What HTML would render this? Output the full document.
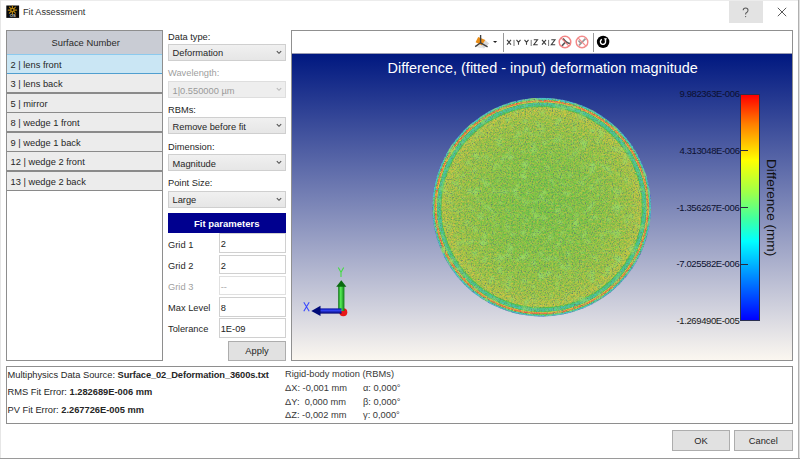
<!DOCTYPE html>
<html><head><meta charset="utf-8">
<style>
*{box-sizing:border-box;margin:0;padding:0}
html,body{width:800px;height:459px;overflow:hidden;background:#fff}
body{position:relative;font-family:"Liberation Sans",sans-serif;font-size:9.3px;color:#262626}
.a{position:absolute;white-space:nowrap}
.t{position:absolute;white-space:nowrap;line-height:1}
/* table */
#tbl{position:absolute;left:6px;top:30px;width:157px;height:331px;border:1px solid #8e8e8e;background:#fff;overflow:hidden}
#tin{position:absolute;left:0;top:-1px;width:155px;height:331px}
.row{position:absolute;left:0;width:155px;background:#ededed;border-bottom:1.5px solid #7d7d7d}
.combo{position:absolute;left:167.5px;width:118.5px;height:17px;border:1px solid #cfcfcf;background:linear-gradient(#f0f0f0,#e6e6e6)}
.combo .chev{position:absolute;left:107.8px;top:5.2px}
.field{position:absolute;left:218.5px;width:67px;height:19.5px;border:1px solid #d0d0d0;background:#fff}
.btn{position:absolute;background:#e1e1e1;border:1px solid #adadad}
</style></head><body>
<!-- window frame -->
<div class="a" style="left:0;top:0;width:800px;height:1px;background:#ececec"></div>
<div class="a" style="left:0;top:0;width:1px;height:459px;background:#e6e6e6"></div>
<div class="a" style="left:798px;top:0;width:1px;height:459px;background:#b0b0b0"></div><div class="a" style="left:799px;top:0;width:1px;height:459px;background:#dedede"></div>
<div class="a" style="left:0;top:458px;width:800px;height:1px;background:#9a9a9a"></div>

<!-- title bar -->
<svg class="a" style="left:6px;top:5px" width="14" height="14" viewBox="0 0 14 14">
<rect x="0.3" y="0.5" width="12.8" height="12.4" fill="#0a0a0a"/>
<g stroke="#b8860f" stroke-width="1.1" stroke-linecap="round">
<line x1="6.4" y1="0.9" x2="6.4" y2="9.3"/><line x1="2.2" y1="5.1" x2="10.6" y2="5.1"/>
<line x1="3.4" y1="2.1" x2="9.4" y2="8.1"/><line x1="9.4" y1="2.1" x2="3.4" y2="8.1"/>
</g>
<circle cx="6.4" cy="5.1" r="2.3" fill="#b8860f"/>
<circle cx="6.4" cy="5.1" r="1" fill="#0a0a0a"/>
<text x="6.7" y="12.2" font-size="4.2" font-weight="bold" fill="#c8c8c8" text-anchor="middle" font-family="Liberation Sans">OS</text>
</svg>
<div class="t" style="left:23px;top:8.3px;font-size:9.2px;color:#333">Fit Assessment</div>
<div class="a" style="left:729px;top:1px;width:34px;height:22px;background:#e3e3e3"></div>
<svg class="a" style="left:740px;top:6px" width="12" height="13" viewBox="0 0 12 13"><path d="M3.2 4.2 Q3.2 2 5.6 2 Q8 2 8 4.3 Q8 5.9 6.3 6.8 Q5.6 7.2 5.6 8.6" stroke="#5a5a5a" stroke-width="1.05" fill="none"/><circle cx="5.6" cy="10.6" r="0.65" fill="#5a5a5a"/></svg>
<svg class="a" style="left:777px;top:7px" width="10" height="10"><path d="M0.8 0.8L9.2 9.2M9.2 0.8L0.8 9.2" stroke="#505050" stroke-width="0.95"/></svg>

<!-- surface table -->
<div id="tbl"><div id="tin">
  <div class="a" style="left:0;top:0;width:155px;height:24.5px;background:#c9ccd4"></div>
  <div class="t" style="left:44.5px;top:8.3px;color:#2a2a2a;font-size:9.4px">Surface Number</div>
  <div class="a" style="left:0;top:24px;width:155px;height:20px;background:#cae6f4;border-top:1px solid #8ccaee;border-bottom:1px solid #509fd0"></div>
  <div class="a" style="left:0;top:44px;width:155px;height:117px;background:#ececec"></div>
  <div class="a" style="left:0;top:62.2px;width:155px;height:1.6px;background:#8a8a8a"></div>
  <div class="a" style="left:0;top:81.75px;width:155px;height:1.6px;background:#8a8a8a"></div>
  <div class="a" style="left:0;top:101.25px;width:155px;height:1.6px;background:#8a8a8a"></div>
  <div class="a" style="left:0;top:120.75px;width:155px;height:1.6px;background:#8a8a8a"></div>
  <div class="a" style="left:0;top:140.25px;width:155px;height:1.6px;background:#8a8a8a"></div>
  <div class="a" style="left:0;top:159.6px;width:155px;height:1.6px;background:#8a8a8a"></div>
  <div class="t" style="left:3.5px;top:30.60px">2 | lens front</div>
  <div class="t" style="left:3.5px;top:50.10px">3 | lens back</div>
  <div class="t" style="left:3.5px;top:69.60px">5 | mirror</div>
  <div class="t" style="left:3.5px;top:89.10px">8 | wedge 1 front</div>
  <div class="t" style="left:3.5px;top:108.60px">9 | wedge 1 back</div>
  <div class="t" style="left:3.5px;top:128.10px">12 | wedge 2 front</div>
  <div class="t" style="left:3.5px;top:147.60px">13 | wedge 2 back</div>
</div></div>

<!-- middle controls -->
<div class="t" style="left:168px;top:32.6px">Data type:</div>
<div class="combo" style="top:43.5px"><div class="t" style="left:4px;top:4.5px">Deformation</div><svg class="chev" width="7" height="5" viewBox="0 0 7 5"><path d="M0.8 1.2 L3 3.3 L5.2 1.2" stroke="#505050" stroke-width="1.1" fill="none"/></svg></div>
<div class="t" style="left:168px;top:69.1px;color:#a0a0a0">Wavelength:</div>
<div class="combo" style="top:81px;border-color:#dedede;background:#eeeeee"><div class="t" style="left:4px;top:4.5px;color:#9a9a9a">1|0.550000 µm</div><svg class="chev" width="7" height="5" viewBox="0 0 7 5"><path d="M0.8 1.2 L3 3.3 L5.2 1.2" stroke="#b8b8b8" stroke-width="1.1" fill="none"/></svg></div>
<div class="t" style="left:168px;top:106.1px">RBMs:</div>
<div class="combo" style="top:117px"><div class="t" style="left:4px;top:4.5px">Remove before fit</div><svg class="chev" width="7" height="5" viewBox="0 0 7 5"><path d="M0.8 1.2 L3 3.3 L5.2 1.2" stroke="#505050" stroke-width="1.1" fill="none"/></svg></div>
<div class="t" style="left:168px;top:142.6px">Dimension:</div>
<div class="combo" style="top:154px"><div class="t" style="left:4px;top:4.5px">Magnitude</div><svg class="chev" width="7" height="5" viewBox="0 0 7 5"><path d="M0.8 1.2 L3 3.3 L5.2 1.2" stroke="#505050" stroke-width="1.1" fill="none"/></svg></div>
<div class="t" style="left:168px;top:179.1px">Point Size:</div>
<div class="combo" style="top:190.5px"><div class="t" style="left:4px;top:4.5px">Large</div><svg class="chev" width="7" height="5" viewBox="0 0 7 5"><path d="M0.8 1.2 L3 3.3 L5.2 1.2" stroke="#505050" stroke-width="1.1" fill="none"/></svg></div>

<div class="a" style="left:167.5px;top:213px;width:118.5px;height:20px;background:#00008f"></div>
<div class="t" style="left:167.5px;top:218.8px;width:118.5px;text-align:center;color:#fff;font-weight:bold;font-size:9.5px">Fit parameters</div>

<div class="t" style="left:168px;top:240.6px">Grid 1</div>
<div class="field" style="top:233px"><div class="t" style="left:1.2px;top:6px;color:#222">2</div></div>
<div class="t" style="left:168px;top:261.6px">Grid 2</div>
<div class="field" style="top:254.5px"><div class="t" style="left:1.2px;top:6px;color:#222">2</div></div>
<div class="t" style="left:168px;top:282.6px;color:#a0a0a0">Grid 3</div>
<div class="field" style="top:275.5px;border-color:#e0e0e0"><div class="t" style="left:1.2px;top:6px;color:#aaa">--</div></div>
<div class="t" style="left:168px;top:303.6px">Max Level</div>
<div class="field" style="top:297px"><div class="t" style="left:1.2px;top:6px;color:#222">8</div></div>
<div class="t" style="left:168px;top:324.6px">Tolerance</div>
<div class="field" style="top:318px"><div class="t" style="left:1.2px;top:6px;color:#222">1E-09</div></div>
<div class="btn" style="left:228px;top:341px;width:58px;height:20px"><div class="t" style="left:0;top:5px;width:56px;text-align:center">Apply</div></div>

<!-- 3D view -->
<div class="a" style="left:291px;top:30px;width:502px;height:331px;border:1px solid #909090;background:#fff;overflow:hidden">
  <div class="a" style="left:0;top:22px;width:500px;height:1px;background:#9a9cb4"></div>
  <div class="a" style="left:0;top:23px;width:500px;height:306px;background:linear-gradient(#001880,#fbf7f0)"></div>
</div>
<!-- toolbar -->
<svg class="a" style="left:472px;top:32px" width="28" height="19" viewBox="0 0 28 19">
<path d="M8.6 10.8 L13.3 8.3 L17.2 11.5 L12 16.6 L8.6 13.5 Z" fill="#d8d8d8"/>
<path d="M3.3 13.8 L8.6 10.8 L8.6 13.5 L12 16.6 L6 15.5 Z" fill="#e6e6e6"/>
<path d="M3.6 10.2 L6.2 5.0 L13.3 8.0 L9.7 13.2 Z" fill="#e88b14"/>
<path d="M8.6 3 V11.2 M8.6 10.8 L3.2 14.6 M8.6 10.8 L15.6 14.8" stroke="#404040" stroke-width="1.35" fill="none"/>
<path d="M21 8.9 H25.2 L23.1 11 Z" fill="#222"/>
</svg>
<div class="a" style="left:502.5px;top:32.5px;width:1px;height:19px;background:#9a9a9a"></div>
<svg class="a" style="left:505px;top:37px" width="52" height="10" viewBox="0 0 52 10">
<g stroke="#3c3c3c" stroke-width="1.1" fill="none">
<path d="M2 2.8 L6 7.7 M6 2.8 L2 7.7"/><path d="M9 2.9 V9" stroke="#777" stroke-width="1"/><path d="M11.5 2.8 L13.5 5.3 L15.5 2.8 M13.5 5.3 V7.7"/>
<path d="M19.5 2.8 L21.5 5.3 L23.5 2.8 M21.5 5.3 V7.7"/><path d="M26.2 2.9 V9" stroke="#777" stroke-width="1"/><path d="M28.8 2.8 H32.5 L28.8 7.7 H32.7"/>
<path d="M37 2.8 L41 7.7 M41 2.8 L37 7.7"/><path d="M43.6 2.9 V9" stroke="#777" stroke-width="1"/><path d="M46.3 2.8 H50 L46.3 7.7 H50.2"/>
</g>
</svg>
<svg class="a" style="left:558px;top:35px" width="14" height="14" viewBox="0 0 14 14">
<path d="M5 3.5 Q8 8 12 8.5" stroke="#555" stroke-width="1.7" fill="none"/>
<path d="M7.5 7 L3.8 11" stroke="#555" stroke-width="1.7"/>
<circle cx="7" cy="7" r="5.8" fill="none" stroke="#f28585" stroke-width="1.45"/>
<path d="M3 2.8 L11 11.2" stroke="#f28585" stroke-width="1.2"/>
</svg>
<svg class="a" style="left:575.2px;top:35px" width="14" height="14" viewBox="0 0 14 14">
<path d="M10.5 3.7 L4 10.3 M3.5 5.5 L6.5 9" stroke="#999" stroke-width="1.7" fill="none"/>
<circle cx="7" cy="7" r="5.8" fill="none" stroke="#f28a8a" stroke-width="1.45"/>
<path d="M3 2.8 L11 11.2" stroke="#f28a8a" stroke-width="1.2"/>
</svg>
<div class="a" style="left:592.5px;top:32.5px;width:1px;height:19px;background:#9a9a9a"></div>
<svg class="a" style="left:596px;top:35px" width="14" height="14" viewBox="0 0 14 14">
<circle cx="7.1" cy="6.9" r="6.2" fill="#000"/>
<path d="M5.9 4.4 A2.6 2.6 0 1 0 9.0 5.1" stroke="#fff" stroke-width="1.35" fill="none"/>
<path d="M7.7 3.4 L10.7 3.0 L10.1 6.3 Z" fill="#fff"/>
</svg>

<!-- title in view -->
<div class="t" style="left:387.5px;top:61.2px;font-size:14.45px;color:#fff">Difference, (fitted - input) deformation magnitude</div>

<!-- disk -->
<svg class="a" style="left:426px;top:92px" width="232" height="232" viewBox="-4 -4 232 232">
<defs>
<radialGradient id="dg" cx="111.7" cy="111.2" r="109.5" gradientUnits="userSpaceOnUse">
<stop offset="0" stop-color="rgb(150,150,150)"/>
<stop offset="0.5" stop-color="rgb(155,155,155)"/>
<stop offset="0.8" stop-color="rgb(163,163,163)"/>
<stop offset="0.88" stop-color="rgb(170,170,170)"/>
<stop offset="0.91" stop-color="rgb(172,172,172)"/>
<stop offset="0.925" stop-color="rgb(96,96,96)"/>
<stop offset="0.95" stop-color="rgb(86,86,86)"/>
<stop offset="0.962" stop-color="rgb(205,205,205)"/>
<stop offset="0.975" stop-color="rgb(228,228,228)"/>
<stop offset="0.984" stop-color="rgb(80,80,80)"/>
<stop offset="1" stop-color="rgb(50,50,50)"/>
</radialGradient>
<filter id="nz" x="-4" y="-4" width="232" height="232" filterUnits="userSpaceOnUse" color-interpolation-filters="sRGB">
<feTurbulence type="fractalNoise" baseFrequency="0.9" numOctaves="1" seed="2" result="td"/>
<feDisplacementMap in="SourceGraphic" in2="td" scale="2.2" xChannelSelector="R" yChannelSelector="G" result="disp"/>
<feTurbulence type="fractalNoise" baseFrequency="0.55" numOctaves="2" seed="5" result="t1"/>
<feColorMatrix in="t1" values="1 0 0 0 0  1 0 0 0 0  1 0 0 0 0  0 0 0 0 0.5" result="n1"/>
<feComposite in="disp" in2="n1" operator="arithmetic" k1="0" k2="1" k3="0.45" k4="-0.1125" result="v"/>
<feComponentTransfer in="v" result="jet">
<feFuncR type="table" tableValues="0 0 0 1 1"/>
<feFuncG type="table" tableValues="0 1 1 1 0"/>
<feFuncB type="table" tableValues="1 1 0 0 0"/>
<feFuncA type="table" tableValues="0 1 1"/>
</feComponentTransfer>
<feColorMatrix in="jet" values="0.6 0 0 0 0.3  0 0.6 0 0 0.17  0 0 0.52 0 0.27  0 0 0 1 0" result="jet2"/>
<feTurbulence type="fractalNoise" baseFrequency="0.85" numOctaves="2" seed="9" result="t2"/>
<feColorMatrix in="t2" values="0 0 0 0 0.38  0 0 0 0 0.52  0 0 0 0 0.42  2.6 0 0 0 -1.3" result="sp"/>
<feTurbulence type="fractalNoise" baseFrequency="0.12" numOctaves="3" seed="21" result="t3"/>
<feColorMatrix in="t3" values="0 0 0 0 0.6  0 0 0 0 0.86  0 0 0 0 0.4  2.8 0 0 0 -1.45" result="lt"/>
<feMerge result="m"><feMergeNode in="jet2"/><feMergeNode in="lt"/><feMergeNode in="sp"/></feMerge>
<feGaussianBlur in="m" stdDeviation="0.4" result="sb"/>
<feComposite in="sb" in2="SourceAlpha" operator="in"/>
</filter>
</defs>
<circle cx="111.7" cy="111.2" r="109.5" fill="url(#dg)" filter="url(#nz)"/>
</svg>

<!-- color bar -->
<div class="a" style="left:740px;top:94px;width:20px;height:227px;border:1px solid #2a3050;background:linear-gradient(#ff0000 0%,#ff8000 13%,#ffff00 29%,#a0ff48 43%,#40ffa0 55%,#00ffff 65%,#0090ff 80%,#0000ff 100%)"></div>
<div class="a" style="left:740px;top:150px;width:8px;height:1px;background:#2a2a40"></div>
<div class="a" style="left:740px;top:207px;width:8px;height:1px;background:#2a2a40"></div>
<div class="a" style="left:740px;top:264px;width:8px;height:1px;background:#2a2a40"></div>
<div class="t" style="left:679.5px;top:89px;font-size:9.5px;letter-spacing:-0.38px;color:#0c1030">9.982363E-006</div>
<div class="t" style="left:679.5px;top:145.7px;font-size:9.5px;letter-spacing:-0.38px;color:#0c1030">4.313048E-006</div>
<div class="t" style="left:676.5px;top:202.5px;font-size:9.5px;letter-spacing:-0.38px;color:#0c1030">-1.356267E-006</div>
<div class="t" style="left:676.5px;top:259.3px;font-size:9.5px;letter-spacing:-0.38px;color:#0c1030">-7.025582E-006</div>
<div class="t" style="left:676.5px;top:316px;font-size:9.5px;letter-spacing:-0.38px;color:#1a1a1a">-1.269490E-005</div>
<div class="t" style="left:764.5px;top:159px;font-size:13.6px;color:#111;transform-origin:0 0;transform:translate(13px,0) rotate(90deg)">Difference (mm)</div>

<!-- axes -->
<svg class="a" style="left:298px;top:262px" width="56" height="58" viewBox="0 0 56 58">
<defs>
<linearGradient id="gy" x1="0" x2="1" y1="0" y2="0"><stop offset="0" stop-color="#0a6a10"/><stop offset="0.4" stop-color="#58f058"/><stop offset="1" stop-color="#0c7a14"/></linearGradient>
<linearGradient id="bx" x1="0" x2="0" y1="0" y2="1"><stop offset="0" stop-color="#0810a0"/><stop offset="0.4" stop-color="#3040f0"/><stop offset="1" stop-color="#00006a"/></linearGradient>
</defs>
<circle cx="45.3" cy="50.3" r="4" fill="#e81818"/>
<path d="M40.3 5.5 L43 10.3 L45.7 5.5 M43 10.3 V15" stroke="#44dd44" stroke-width="1.1" fill="none"/>
<path d="M40.2 23.5 H46.4 V49 H40.2 Z" fill="url(#gy)"/>
<path d="M38.2 24.8 L43.3 18.3 L48.4 24.8 Z" fill="#0a6a10"/>
<path d="M21 46.4 H43.5 V51.6 H21 Z" fill="url(#bx)"/>
<path d="M22.5 43.8 L13.3 49 L22.5 54 Z" fill="#000a78"/>
<path d="M5.8 40.2 L11.2 49.2 M11.2 40.2 L5.8 49.2" stroke="#3848ff" stroke-width="1.1" fill="none"/>
</svg>

<!-- bottom panel -->
<div class="a" style="left:6px;top:366px;width:787px;height:58px;border:1px solid #8e8e8e"></div>
<div class="t" style="left:7.5px;top:370.5px">Multiphysics Data Source: <b style="letter-spacing:-0.1px">Surface_02_Deformation_3600s.txt</b></div>
<div class="t" style="left:7.5px;top:387.5px">RMS Fit Error: <b>1.282689E-006 mm</b></div>
<div class="t" style="left:7.5px;top:405.5px">PV Fit Error: <b>2.267726E-005 mm</b></div>
<div class="t" style="left:285px;top:370.4px;color:#383838">Rigid-body motion (RBMs)</div>
<div class="t" style="left:285px;top:384.4px;color:#383838">ΔX: -0,001 mm</div>
<div class="t" style="left:285px;top:397.9px;color:#383838">ΔY: &nbsp;0,000 mm</div>
<div class="t" style="left:285px;top:411.4px;color:#383838">ΔZ: -0,002 mm</div>
<div class="t" style="left:363px;top:384.4px;color:#383838">α: 0,000°</div>
<div class="t" style="left:363px;top:397.9px;color:#383838">β: 0,000°</div>
<div class="t" style="left:363px;top:411.4px;color:#383838">γ: 0,000°</div>

<!-- OK / Cancel -->
<div class="btn" style="left:672px;top:430px;width:58px;height:21px"><div class="t" style="left:0;top:6px;width:56px;text-align:center">OK</div></div>
<div class="btn" style="left:734px;top:430px;width:58.5px;height:21px"><div class="t" style="left:0;top:6px;width:56.5px;text-align:center">Cancel</div></div>
</body></html>
